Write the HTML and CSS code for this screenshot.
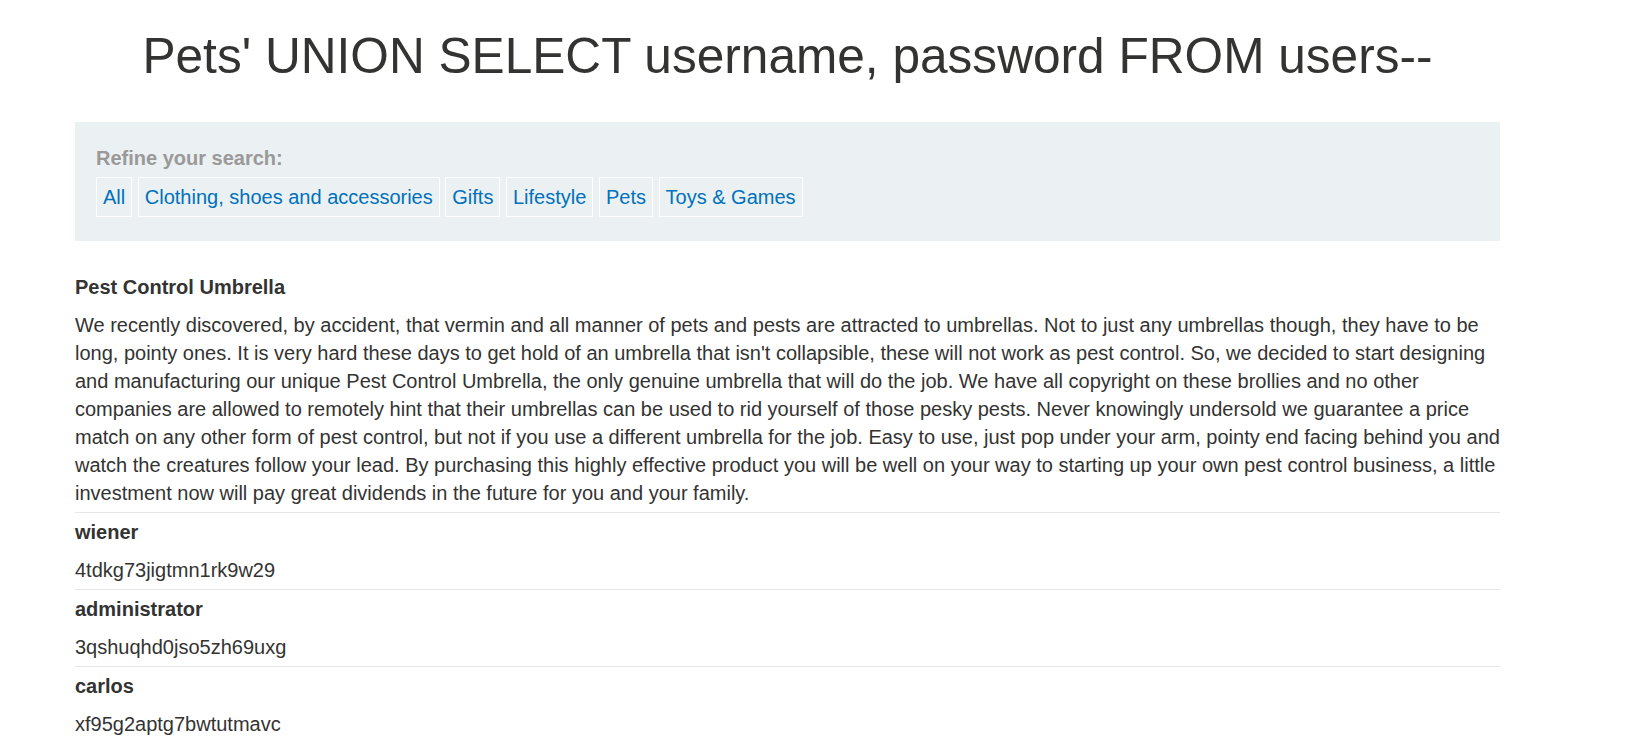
FILE: index.html
```html
<!DOCTYPE html>
<html lang="en">
<head>
<meta charset="utf-8">
<title>Filter</title>
<link rel="stylesheet" href="styles.css">
</head>
<body>
<div class="container">
  <h1 class="page-title">Pets' UNION SELECT username, password FROM users--</h1>
  <section class="filter">
    <div class="filter-label">Refine your search:</div>
    <div class="filter-links">
      <a class="filter-link" href="#">All</a>
      <a class="filter-link" href="#">Clothing, shoes and accessories</a>
      <a class="filter-link" href="#">Gifts</a>
      <a class="filter-link" href="#">Lifestyle</a>
      <a class="filter-link" href="#">Pets</a>
      <a class="filter-link" href="#">Toys &amp; Games</a>
    </div>
  </section>
  <table class="results">
    <tbody>
      <tr><th>Pest Control Umbrella</th></tr>
      <tr><td>We recently discovered, by accident, that vermin and all manner of pets and pests are attracted to umbrellas. Not to just any umbrellas though, they have to be long, pointy ones. It is very hard these days to get hold of an umbrella that isn't collapsible, these will not work as pest control. So, we decided to start designing and manufacturing our unique Pest Control Umbrella, the only genuine umbrella that will do the job. We have all copyright on these brollies and no other companies are allowed to remotely hint that their umbrellas can be used to rid yourself of those pesky pests. Never knowingly undersold we guarantee a price match on any other form of pest control, but not if you use a different umbrella for the job. Easy to use, just pop under your arm, pointy end facing behind you and watch the creatures follow your lead. By purchasing this highly effective product you will be well on your way to starting up your own pest control business, a little investment now will pay great dividends in the future for you and your family.</td></tr>
      <tr><th>wiener</th></tr>
      <tr><td>4tdkg73jigtmn1rk9w29</td></tr>
      <tr><th>administrator</th></tr>
      <tr><td>3qshuqhd0jso5zh69uxg</td></tr>
      <tr><th>carlos</th></tr>
      <tr><td>xf95g2aptg7bwtutmavc</td></tr>
    </tbody>
  </table>
</div>
</body>
</html>
```
FILE: styles.css
```css
html, body {
  margin: 0;
  padding: 0;
  background: #ffffff;
}

body {
  font-family: "Liberation Sans", Arial, sans-serif;
  font-size: 20px;
  line-height: 28px;
  color: #333332;
}

.container {
  width: 1425px;
  margin-left: 75px;
}

.page-title {
  margin: 26px 0 36px;
  font-size: 49.6px;
  line-height: 60px;
  font-weight: normal;
  text-align: center;
  color: #333332;
}

.filter {
  background: #ebf0f2;
  padding: 22px 21px 24px;
  height: 119px;
  box-sizing: border-box;
}

.filter-label {
  font-weight: bold;
  color: #999999;
}

.filter-links {
  margin-top: 5px;
}

.filter-link {
  display: inline-block;
  padding: 5px 6px;
  border: 1px solid #ffffff;
  color: #0071bc;
  text-decoration: none;
  vertical-align: top;
}

.results {
  width: 100%;
  margin-top: 27px;
  border-collapse: collapse;
}

.results th,
.results td {
  padding: 5px 0;
  text-align: left;
  vertical-align: top;
}

.results th {
  font-weight: bold;
}

.results td {
  border-bottom: 1px solid #e6e6e6;
}
```
